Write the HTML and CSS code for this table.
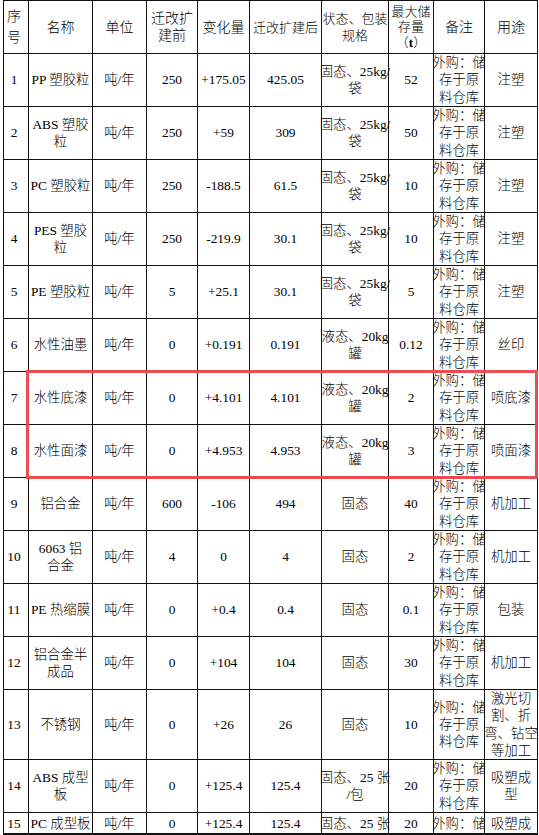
FILE: index.html
```html
<!DOCTYPE html>
<html lang="zh">
<head>
<meta charset="utf-8">
<title>原辅材料表</title>
<link rel="stylesheet" href="styles.css">
</head>
<body>
<div class="sheet">
  <div class="c h no lh21"><span>序<br>号</span></div>
  <div class="c h">名称</div>
  <div class="c h">单位</div>
  <div class="c h"><span>迁改扩<br>建前</span></div>
  <div class="c h">变化量</div>
  <div class="c h sm">迁改扩建后</div>
  <div class="c h sm"><span>状态、包装<br>规格</span></div>
  <div class="c h sm lh16"><span>最大储<br>存量<br>（<b>t</b>）</span></div>
  <div class="c h">备注</div>
  <div class="c h">用途</div>

  <div class="c no">1</div><div class="c">PP 塑胶粒</div><div class="c">吨/年</div><div class="c">250</div><div class="c">+175.05</div><div class="c">425.05</div><div class="c"><span>固态、25kg/<br>袋</span></div><div class="c">52</div><div class="c"><span>外购：储<br>存于原<br>料仓库</span></div><div class="c">注塑</div>

  <div class="c no">2</div><div class="c"><span>ABS 塑胶<br>粒</span></div><div class="c">吨/年</div><div class="c">250</div><div class="c">+59</div><div class="c">309</div><div class="c"><span>固态、25kg/<br>袋</span></div><div class="c">50</div><div class="c"><span>外购：储<br>存于原<br>料仓库</span></div><div class="c">注塑</div>

  <div class="c no">3</div><div class="c">PC 塑胶粒</div><div class="c">吨/年</div><div class="c">250</div><div class="c">-188.5</div><div class="c">61.5</div><div class="c"><span>固态、25kg/<br>袋</span></div><div class="c">10</div><div class="c"><span>外购：储<br>存于原<br>料仓库</span></div><div class="c">注塑</div>

  <div class="c no">4</div><div class="c"><span>PES 塑胶<br>粒</span></div><div class="c">吨/年</div><div class="c">250</div><div class="c">-219.9</div><div class="c">30.1</div><div class="c"><span>固态、25kg/<br>袋</span></div><div class="c">10</div><div class="c"><span>外购：储<br>存于原<br>料仓库</span></div><div class="c">注塑</div>

  <div class="c no">5</div><div class="c">PE 塑胶粒</div><div class="c">吨/年</div><div class="c">5</div><div class="c">+25.1</div><div class="c">30.1</div><div class="c"><span>固态、25kg/<br>袋</span></div><div class="c">5</div><div class="c"><span>外购：储<br>存于原<br>料仓库</span></div><div class="c">注塑</div>

  <div class="c no">6</div><div class="c">水性油墨</div><div class="c">吨/年</div><div class="c">0</div><div class="c">+0.191</div><div class="c">0.191</div><div class="c"><span>液态、20kg<br>罐</span></div><div class="c">0.12</div><div class="c"><span>外购：储<br>存于原<br>料仓库</span></div><div class="c">丝印</div>

  <div class="c no">7</div><div class="c">水性底漆</div><div class="c">吨/年</div><div class="c">0</div><div class="c">+4.101</div><div class="c">4.101</div><div class="c"><span>液态、20kg<br>罐</span></div><div class="c">2</div><div class="c"><span>外购：储<br>存于原<br>料仓库</span></div><div class="c">喷底漆</div>

  <div class="c no">8</div><div class="c">水性面漆</div><div class="c">吨/年</div><div class="c">0</div><div class="c">+4.953</div><div class="c">4.953</div><div class="c"><span>液态、20kg<br>罐</span></div><div class="c">3</div><div class="c"><span>外购：储<br>存于原<br>料仓库</span></div><div class="c">喷面漆</div>

  <div class="c no">9</div><div class="c">铝合金</div><div class="c">吨/年</div><div class="c">600</div><div class="c">-106</div><div class="c">494</div><div class="c">固态</div><div class="c">40</div><div class="c"><span>外购：储<br>存于原<br>料仓库</span></div><div class="c">机加工</div>

  <div class="c no">10</div><div class="c"><span>6063 铝<br>合金</span></div><div class="c">吨/年</div><div class="c">4</div><div class="c">0</div><div class="c">4</div><div class="c">固态</div><div class="c">2</div><div class="c"><span>外购：储<br>存于原<br>料仓库</span></div><div class="c">机加工</div>

  <div class="c no">11</div><div class="c">PE 热缩膜</div><div class="c">吨/年</div><div class="c">0</div><div class="c">+0.4</div><div class="c">0.4</div><div class="c">固态</div><div class="c">0.1</div><div class="c"><span>外购：储<br>存于原<br>料仓库</span></div><div class="c">包装</div>

  <div class="c no">12</div><div class="c"><span>铝合金半<br>成品</span></div><div class="c">吨/年</div><div class="c">0</div><div class="c">+104</div><div class="c">104</div><div class="c">固态</div><div class="c">30</div><div class="c"><span>外购：储<br>存于原<br>料仓库</span></div><div class="c">机加工</div>

  <div class="c no">13</div><div class="c">不锈钢</div><div class="c">吨/年</div><div class="c">0</div><div class="c">+26</div><div class="c">26</div><div class="c">固态</div><div class="c">10</div><div class="c"><span>外购：储<br>存于原<br>料仓库</span></div><div class="c"><span>激光切<br>割、折<br>弯、钻空<br>等加工</span></div>

  <div class="c no">14</div><div class="c"><span>ABS 成型<br>板</span></div><div class="c">吨/年</div><div class="c">0</div><div class="c">+125.4</div><div class="c">125.4</div><div class="c"><span>固态、25 张<br>/包</span></div><div class="c">20</div><div class="c"><span>外购：储<br>存于原<br>料仓库</span></div><div class="c"><span>吸塑成<br>型</span></div>

  <div class="c no cut">15</div><div class="c cut">PC 成型板</div><div class="c cut">吨/年</div><div class="c cut">0</div><div class="c cut">+125.4</div><div class="c cut">125.4</div><div class="c cut">固态、25 张</div><div class="c cut">20</div><div class="c cut">外购：储</div><div class="c cut">吸塑成</div>

  <div class="mark"></div>
</div>
</body>
</html>
```

FILE: styles.css
```css
html, body {
  margin: 0;
  padding: 0;
  background: #fff;
  overflow: hidden;
}

.sheet {
  position: relative;
  margin-left: 3px;
  width: 534px;
  display: grid;
  grid-template-columns: 25px 64px 54px 51px 52px 72px 67px 45px 51px 53px;
  grid-template-rows: repeat(13, 53px) 70px 53px 22px;
  border-left: 1px solid #111;
  border-top: 1px solid #111;
  font-family: "Liberation Serif", "Noto Sans CJK SC", serif;
  font-size: 13.4px;
  font-weight: 300;
  line-height: 17.3px;
  color: #000;
}

.c {
  box-sizing: border-box;
  border-right: 1px solid #111;
  border-bottom: 1px solid #111;
  display: flex;
  align-items: center;
  justify-content: center;
  text-align: center;
  white-space: nowrap;
  overflow: visible;
}

.c span {
  display: block;
}

.h {
  font-size: 14px;
  line-height: 17px;
}

.h.sm {
  font-size: 13px;
}

.lh21 {
  line-height: 21px;
}

.lh16 {
  line-height: 15.5px;
}

.h b {
  font-weight: bold;
}

.no {
  padding-right: 4px;
}

.cut {
  align-items: flex-start;
  padding-top: 2px;
  border-bottom: 2px solid #111;
}

.mark {
  position: absolute;
  left: 22px;
  top: 369px;
  width: 512px;
  height: 109px;
  box-sizing: border-box;
  border: 3px solid #ef4b53;
  pointer-events: none;
}
```
